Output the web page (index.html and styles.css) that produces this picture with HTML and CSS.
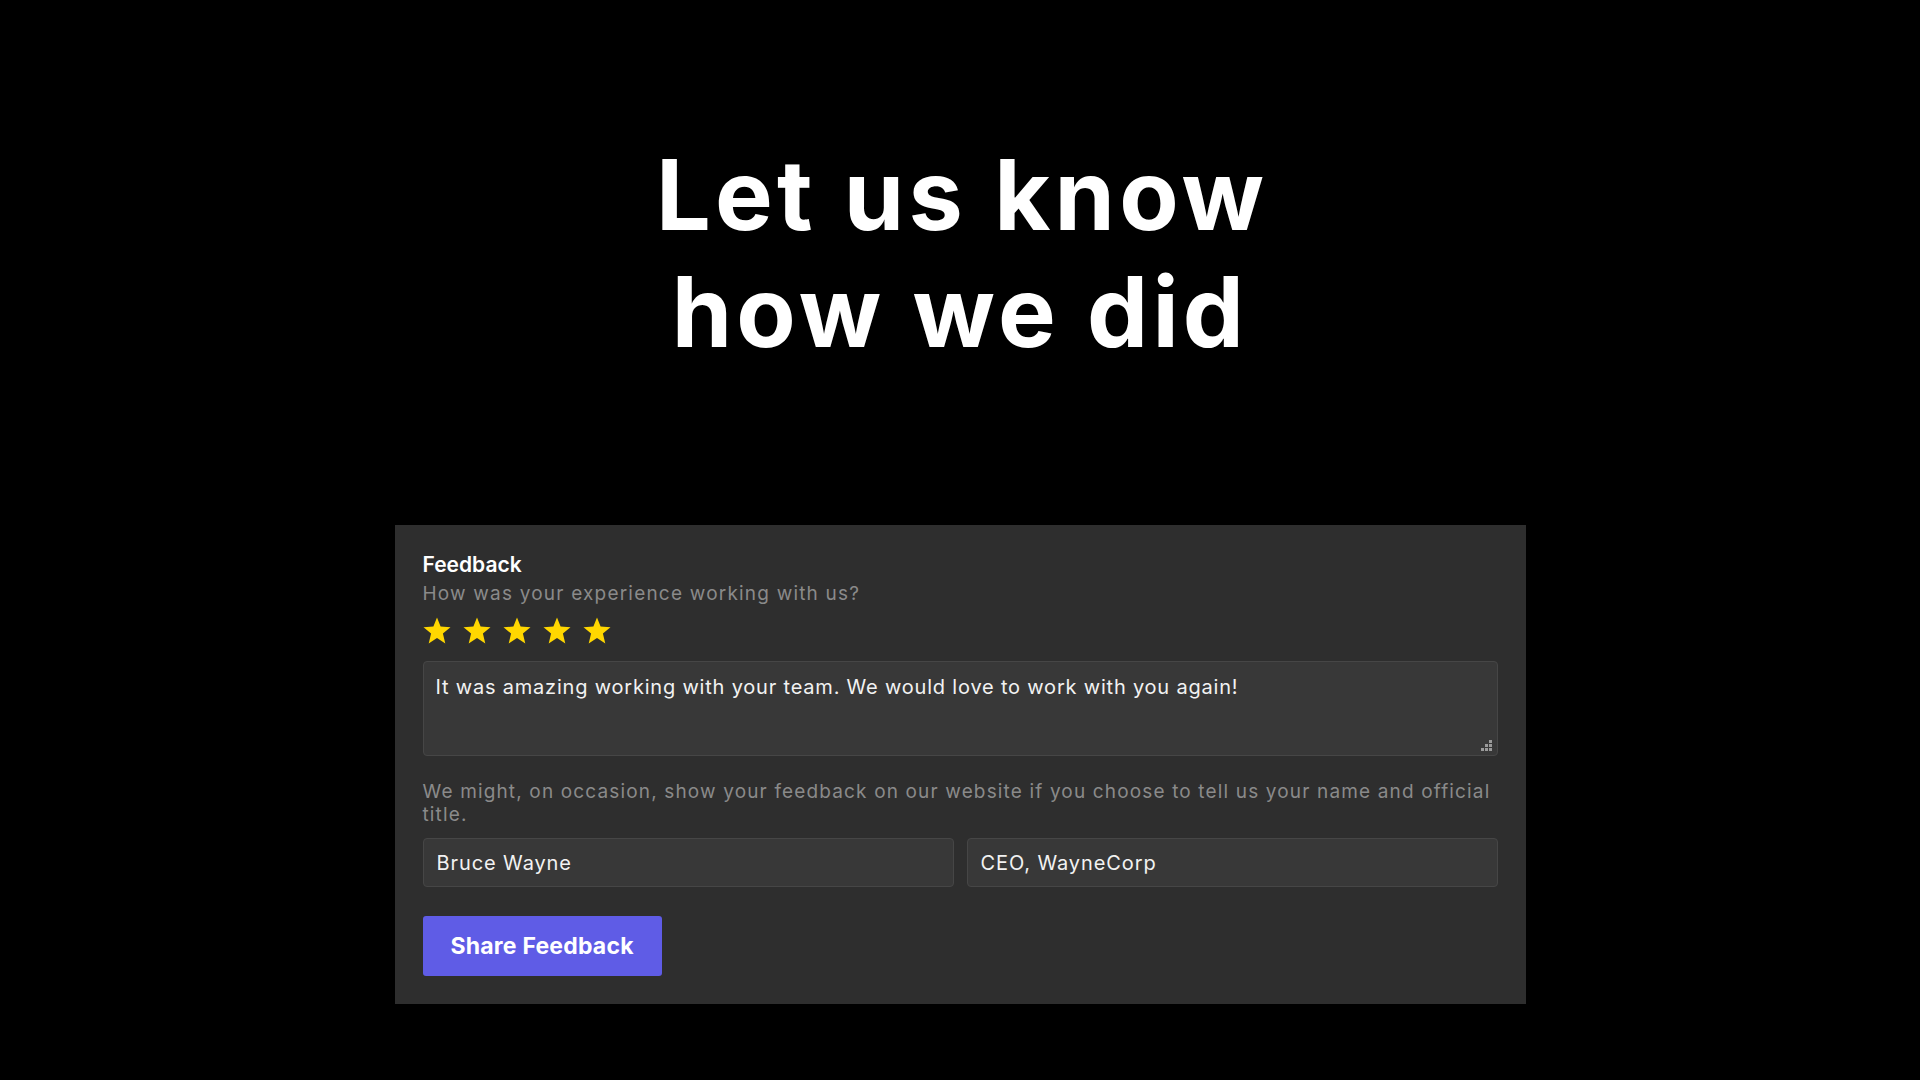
FILE: index.html
```html
<!DOCTYPE html>
<html lang="en">
<head>
<meta charset="utf-8">
<title>Let us know how we did</title>
<link rel="stylesheet" href="styles.css">
</head>
<body>
<main class="page">
  <h1 class="hero">Let us know<br>how we did</h1>
  <form class="card">
    <div class="card-title">Feedback</div>
    <div class="card-sub">How was your experience working with us?</div>
    <div class="stars">
      <svg class="star" viewBox="0 0 28 27"><polygon points="14,0.5 17.6,9.6 27.5,10.3 19.9,16.6 22.3,26.4 14,21.1 5.7,26.4 8.1,16.6 0.5,10.3 10.4,9.6"/></svg>
      <svg class="star" viewBox="0 0 28 27"><polygon points="14,0.5 17.6,9.6 27.5,10.3 19.9,16.6 22.3,26.4 14,21.1 5.7,26.4 8.1,16.6 0.5,10.3 10.4,9.6"/></svg>
      <svg class="star" viewBox="0 0 28 27"><polygon points="14,0.5 17.6,9.6 27.5,10.3 19.9,16.6 22.3,26.4 14,21.1 5.7,26.4 8.1,16.6 0.5,10.3 10.4,9.6"/></svg>
      <svg class="star" viewBox="0 0 28 27"><polygon points="14,0.5 17.6,9.6 27.5,10.3 19.9,16.6 22.3,26.4 14,21.1 5.7,26.4 8.1,16.6 0.5,10.3 10.4,9.6"/></svg>
      <svg class="star" viewBox="0 0 28 27"><polygon points="14,0.5 17.6,9.6 27.5,10.3 19.9,16.6 22.3,26.4 14,21.1 5.7,26.4 8.1,16.6 0.5,10.3 10.4,9.6"/></svg>
    </div>
    <div class="area-wrap">
      <textarea class="area">It was amazing working with your team. We would love to work with you again!</textarea>
      <svg class="grip" viewBox="0 0 11 11"><rect x="8" y="0" width="3" height="3"/><rect x="4" y="4" width="3" height="3"/><rect x="8" y="4" width="3" height="3"/><rect x="0" y="8" width="3" height="3"/><rect x="4" y="8" width="3" height="3"/><rect x="8" y="8" width="3" height="3"/></svg>
    </div>
    <p class="note">We might, on occasion, show your feedback on our website if you choose to tell us your name and official title.</p>
    <div class="fields">
      <input class="field" type="text" value="Bruce Wayne">
      <input class="field" type="text" value="CEO, WayneCorp">
    </div>
    <button class="submit" type="button">Share Feedback</button>
  </form>
</main>
</body>
</html>
```

FILE: styles.css
```css
html, body {
  margin: 0;
  padding: 0;
  background: #000;
}
body {
  font-family: Inter, "Liberation Sans", sans-serif;
  color: #fff;
}
.page {
  display: flex;
  flex-direction: column;
  align-items: center;
  padding-top: 136px;
}
.hero {
  margin: 0;
  font-size: 97px;
  line-height: 117px;
  font-weight: 700;
  text-align: center;
  color: #fff;
  letter-spacing: 4.2px;
  text-indent: 4.2px;
}
.card {
  box-sizing: border-box;
  width: 1131px;
  margin-top: 155px;
  padding: 28px;
  background: #2e2e2e;
  display: flex;
  flex-direction: column;
  align-items: flex-start;
}
.card-title {
  font-size: 21px;
  line-height: 24px;
  font-weight: 600;
  color: #fff;
}
.card-sub {
  margin-top: 5px;
  font-size: 19px;
  line-height: 24px;
  letter-spacing: 1.2px;
  color: #8a8a8a;
}
.stars {
  margin-top: 11px;
  display: flex;
  gap: 12px;
}
.star {
  width: 28px;
  height: 27px;
  fill: #ffd700;
  display: block;
}
.area-wrap {
  position: relative;
  margin-top: 17px;
  width: 100%;
  display: flex;
}
.area {
  box-sizing: border-box;
  width: 100%;
  height: 95px;
  margin: 0;
  padding: 13px 12px;
  background: #383838;
  border: 1px solid #464646;
  border-radius: 4px;
  color: #f2f2f2;
  font-family: Inter, "Liberation Sans", sans-serif;
  font-size: 20px;
  line-height: 24px;
  letter-spacing: 0.8px;
  resize: none;
  outline: none;
}
.grip {
  position: absolute;
  right: 6px;
  bottom: 5px;
  width: 11px;
  height: 11px;
  fill: #9a9a9a;
}
.note {
  margin: 25px 0 0;
  font-size: 19px;
  line-height: 22.5px;
  letter-spacing: 1.15px;
  color: #8a8a8a;
}
.fields {
  margin-top: 12px;
  width: 100%;
  display: grid;
  grid-template-columns: 1fr 1fr;
  gap: 13px;
}
.field {
  box-sizing: border-box;
  width: 100%;
  height: 49px;
  margin: 0;
  padding: 0 13px;
  background: #383838;
  border: 1px solid #464646;
  border-radius: 4px;
  color: #f2f2f2;
  font-family: Inter, "Liberation Sans", sans-serif;
  font-size: 20px;
  letter-spacing: 0.9px;
  outline: none;
}
.submit {
  margin-top: 29px;
  height: 60px;
  padding: 0 28px;
  background: #5f5ce6;
  border: none;
  border-radius: 3px;
  color: #fff;
  font-family: Inter, "Liberation Sans", sans-serif;
  font-size: 23px;
  font-weight: 700;
  letter-spacing: 0.2px;
  cursor: pointer;
}
```
